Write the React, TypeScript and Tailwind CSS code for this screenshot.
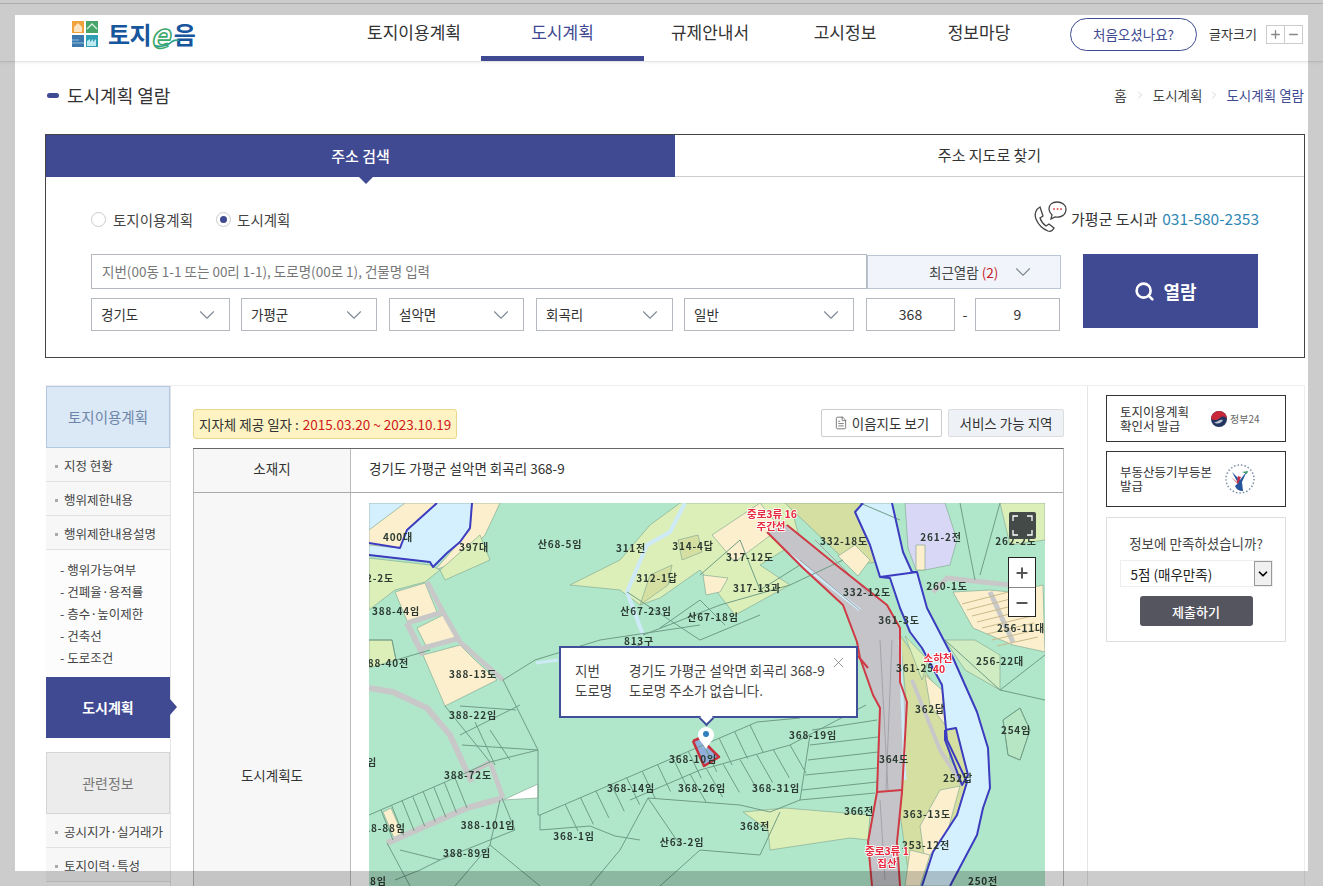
import { ChevronDown, ChevronRight, FileText, Minus, Plus, Search, X } from 'lucide-react';

type Shape = [fill: string, points: string];
type Line = [stroke: string, width: number, points: string];
type Label = [text: string, x: number, y: number];

const BEIGE = '#fcefcd';
const PALE = '#dcefb9';
const KHAKI = '#d5dfa2';
const WATER = '#d4effd';

const fields: Shape[] = [
  [WATER, '369,503 472,503 470,528 460,542 447,553 433,567 430,562 369,555'],
  [BEIGE, '369,545 400,548 407,530 437,503 405,503 369,530'],
  [BEIGE, '472,503 500,503 485,535 462,560 435,570 470,530'],
  [PALE, '369,558 430,565 440,570 425,582 395,590 369,610'],
  [PALE, '440,570 480,535 490,560 445,580'],
  [PALE, '369,640 392,640 396,660 369,668'],
  [BEIGE, '395,592 425,583 437,612 408,623'],
  [BEIGE, '417,628 443,615 457,638 427,648'],
  [BEIGE, '423,655 460,645 475,660 497,680 445,706'],
  [BEIGE, '383,812 391,808 402,833 394,838'],
  [PALE, '570,585 620,560 650,525 680,503 790,503 800,540 760,565 790,585 735,615 700,570 660,598 640,605 620,590'],
  [KHAKI, '678,540 698,535 702,552 682,560'],
  [KHAKI, '650,575 672,565 668,585 640,605'],
  [BEIGE, '712,535 760,503 780,528 735,562'],
  [BEIGE, '703,575 728,578 720,592 706,595'],
  [KHAKI, '785,503 860,503 878,562 850,565'],
  [BEIGE, '838,556 855,545 870,560 858,576'],
  ['#d8d8f6', '905,503 945,503 957,540 950,565 925,570 916,570 908,548'],
  [BEIGE, '916,545 925,545 925,570 916,570'],
  [BEIGE, '953,592 990,590 1010,592 1043,585 1045,652 1013,645 973,628'],
  [PALE, '1000,503 1045,503 1045,540 1010,545'],
  ['#d0ecc2', '945,640 965,670 1000,690 1000,655 975,640'],
  [KHAKI, '900,635 945,700 950,760 968,785 958,812 930,862 910,884 898,800 906,700'],
  [PALE, '905,636 928,660 922,680'],
  [BEIGE, '925,675 942,690 945,725 930,705'],
  [BEIGE, '940,790 960,786 948,830 925,862 920,826'],
  [BEIGE, '910,850 930,855 920,886 905,886'],
  [PALE, '743,812 785,808 870,815 868,840 850,838 770,850 768,830'],
  ['#b6e6c4', '1003,720 1020,708 1030,730 1020,760 1008,755'],
  ['#ffffff', '503,800 538,784 538,798'],
  ['#c4c4c9', '767,532 787,525 840,568 887,605 900,628 900,682 907,702 902,792 897,842 900,886 872,886 868,842 877,792 880,708 873,695 860,658 857,642 843,605 803,568'],
  [WATER, '863,503 892,503 903,552 912,572 917,572 927,608 953,658 977,712 988,748 990,788 983,808 977,835 950,886 922,886 933,852 957,815 967,782 947,740 942,685 922,648 910,632 900,608 890,578 880,577 870,545 855,512'],
  [KHAKI, '945,730 956,728 968,775 962,785 946,740'],
  ['#8fb0dc', '693,741 700,738 719,757 704,766'],
];

const roads: Line[] = [
  ['#c8c8c8', 5, '427,582 443,612 460,642 503,680'],
  ['#c8c8c8', 5, '407,623 443,612'],
  ['#c8c8c8', 5, '423,648 460,638'],
  ['#c8c8c8', 6, '407,623 423,655'],
  ['#c8c8c8', 6, '369,688 393,692 427,708 450,735 467,772 472,782'],
  ['#c8c8c8', 5, '490,762 503,798'],
  ['#c8c8c8', 5, '468,775 490,762'],
  ['#c8c8c8', 6, '503,798 467,808 387,843'],
  ['#c8c8c8', 5, '933,592 947,578 1010,585'],
  ['#c8c8c8', 5, '990,592 1013,642'],
  ['#c8c8c8', 4, '912,680 940,750 962,785'],
];

const water: Line[] = [
  ['#cdeaf6', 4, '685,503 670,532 647,545 627,592 643,635'],
  ['#cdeaf6', 3, '536,663 558,660'],
  ['#cdeaf6', 3, '790,555 860,610'],
  ['#cdeaf6', 3, '900,640 905,780'],
];

const parcels: Line[] = [
  ['#6f9d85', 1, '369,640 392,640 396,660 430,650'],
  ['#6f9d85', 1, '503,680 535,660 600,640 700,625'],
  ['#6f9d85', 1, '503,680 538,750 538,815 540,815'],
  ['#6f9d85', 1, '460,706 516,710'],
  ['#6f9d85', 1, '445,706 490,762'],
  ['#6f9d85', 1, '460,735 520,705'],
  ['#6f9d85', 1, '462,745 538,750'],
  ['#6f9d85', 1, '490,730 510,760'],
  ['#6f9d85', 1, '475,722 495,765'],
  ['#6f9d85', 1, '369,815 443,783 490,762 538,750'],
  ['#6f9d85', 1, '502,798 515,830 440,860 400,850'],
  ['#6f9d85', 1, '387,843 410,886'],
  ['#6f9d85', 1, '500,800 490,845 455,886'],
  ['#6f9d85', 1, '490,845 540,886'],
  ['#6f9d85', 1, '440,860 420,870 395,880'],
  ['#6f9d85', 1, '540,815 540,830 590,826 615,836 640,840'],
  ['#6f9d85', 1, '540,815 757,722 800,718'],
  ['#6f9d85', 1, '630,800 700,770 790,745 866,705'],
  ['#6f9d85', 1, '648,798 740,805 770,812 800,800 875,793'],
  ['#6f9d85', 1, '648,798 620,850 590,886'],
  ['#6f9d85', 1, '648,798 680,845'],
  ['#6f9d85', 1, '660,886 700,850 760,855 780,812'],
  ['#6f9d85', 1, '627,592 700,640 760,615'],
  ['#6f9d85', 1, '660,628 700,600 725,625'],
  ['#6f9d85', 1, '643,635 720,605 790,585 843,560'],
  ['#6f9d85', 1, '590,660 640,645'],
  ['#6f9d85', 1, '700,575 740,540 760,590 800,565'],
  ['#6f9d85', 1, '810,735 800,800'],
  ['#6f9d85', 1, '812,730 877,720'],
  ['#6f9d85', 1, '810,745 878,737'],
  ['#6f9d85', 1, '808,760 878,752'],
  ['#6f9d85', 1, '805,775 877,768'],
  ['#6f9d85', 1, '802,790 877,782'],
  ['#6f9d85', 1, '1000,690 1045,700'],
  ['#6f9d85', 1, '945,640 1000,690 1045,655'],
  ['#6f9d85', 1, '960,503 975,580'],
  ['#6f9d85', 1, '1000,503 980,575'],
  ['#6f9d85', 1, '1003,720 1020,708 1030,730 1020,760 1008,755 1003,720'],
  ['#6f9d85', 1, '900,520 860,503'],
];

const boundaries: Line[] = [
  ['#cf3a44', 2, '767,532 803,568 843,605 857,642 860,658 873,695 880,708 877,792 868,842 872,886'],
  ['#cf3a44', 2, '787,525 840,568 887,605 900,628 900,682 907,702 902,792 897,842 900,886'],
  ['#cf3a44', 2, '877,792 902,790'],
  ['#cf3a44', 2, '857,655 868,668'],
  ['#3c3cc0', 2, '437,503 407,530 400,548 369,543'],
  ['#3c3cc0', 2, '472,503 470,528 460,542 447,553 433,567 430,562 369,555'],
  ['#3c3cc0', 2, '863,503 855,512 870,545 880,577 890,578 900,608 910,632 922,648 942,685 947,740 967,782 957,815 933,852 922,886'],
  ['#3c3cc0', 2, '892,503 903,552 912,572 917,572 927,608 953,658 977,712 988,748 990,788 983,808 977,835 950,886'],
  ['#3c3cc0', 2, '880,577 917,572'],
  ['#3c3cc0', 2, '945,730 956,728 968,775 962,785 945,740 945,730'],
  ['#c8303c', 2.500, '693,741 700,738 719,757 704,766 693,741'],
];

const labels: Label[] = [
  ['400대', 398, 541], ['397대', 474, 551], ['산68-5임', 560, 548], ['311전', 631, 552], ['314-4답', 693, 550],
  ['317-12도', 750, 561], ['332-18도', 844, 545], ['261-2전', 941, 541], ['262-2도', 1016, 545],
  ['2-2도', 380, 582], ['312-1답', 657, 582], ['317-13과', 757, 592], ['332-12도', 867, 596], ['260-1도', 947, 590],
  ['388-44임', 396, 615], ['산67-23임', 646, 615], ['산67-18임', 713, 621], ['361-3도', 899, 624], ['256-11대', 1021, 632],
  ['813구', 639, 645], ['388-40전', 385, 667], ['361-25', 915, 672], ['256-22대', 1000, 665], ['388-13도', 473, 678],
  ['388-22임', 473, 719], ['362답', 930, 713], ['254임', 1016, 734], ['368-19임', 813, 739], ['364도', 894, 763],
  ['임', 372, 766], ['388-72도', 468, 779], ['368-10임', 693, 763], ['368-14임', 631, 792], ['368-26임', 702, 792],
  ['368-31임', 776, 792], ['252답', 958, 782], ['366전', 859, 815], ['363-13도', 927, 818], ['368전', 755, 830],
  ['388-101임', 488, 829], ['18-88임', 385, 832], ['368-1임', 574, 840], ['산63-2임', 682, 846], ['253-12전', 926, 849],
  ['388-89임', 467, 857], ['18임', 375, 885], ['250전', 983, 885],
];

const redLabels: Label[] = [
  ['중로3류 16', 772, 518], ['주간선', 771, 530], ['소하천', 938, 662], ['40', 939, 673], ['중로3류 1', 887, 855], ['집산', 887, 867],
];

// row of lot dividers hanging off a straight line
function lotLines(x1: number, y1: number, x2: number, y2: number, n: number, dx: number, dy: number) {
  return Array.from({ length: n }, (_, i) => {
    const x = x1 + ((x2 - x1) * i) / (n - 1);
    const y = y1 + ((y2 - y1) * i) / (n - 1);
    return `M${x} ${y}l${dx} ${dy}`;
  }).join('');
}

function LandMap() {
  const lots =
    lotLines(381, 810, 455, 778, 8, 12, 30) +
    lotLines(565, 804, 750, 725, 13, 13, 27) +
    lotLines(690, 774, 790, 745, 7, 16, 28);
  const stripes = Array.from({ length: 8 }, (_, i) => `M${962 + i * 5} ${604 + i * 6}l${62 - i * 3} -${16 - i}`).join('');

  return (
    <svg viewBox="369 503 676 384" className="block h-[384px] w-[676px] bg-[#b0e7cb] blur-[0.35px]">
      {fields.map(([fill, points]) => (
        <polygon key={points} points={points} fill={fill} stroke="#86ad93" strokeWidth="0.7" />
      ))}
      {[...roads, ...water, ...parcels].map(([stroke, width, points]) => (
        <polyline key={points} points={points} fill="none" stroke={stroke} strokeWidth={width} strokeLinejoin="round" />
      ))}
      <path d={lots} stroke="#6f9d85" fill="none" />
      <path d={stripes} stroke="#c9b98a" fill="none" />
      <path d="M800 560l60 50M815 540l55 55M880 640l8 150M892 640l-6 150M880 800l5 80" stroke="#a3a3aa" fill="none" />
      {boundaries.map(([stroke, width, points]) => (
        <polyline key={points} points={points} fill="none" stroke={stroke} strokeWidth={width} strokeLinejoin="round" />
      ))}
      {labels.map(([text, x, y]) => (
        <text key={text + x} x={x} y={y} textAnchor="middle" fontSize="10" fontWeight="700" letterSpacing="0.8" fill="#2c3a32">
          {text}
        </text>
      ))}
      {redLabels.map(([text, x, y]) => (
        <text key={text} x={x} y={y} textAnchor="middle" fontSize="10.5" fontWeight="700" fill="#e8283c" stroke="#ffffff" strokeWidth="1.5" paintOrder="stroke">
          {text}
        </text>
      ))}
      <path d="M706 727c-5 0-8 4-8 8 0 5 5 8 8 14 3-6 8-9 8-14 0-4-3-8-8-8z" fill="#ffffff" />
      <circle cx="706" cy="734" r="3" fill="#2f80c0" />
    </svg>
  );
}

function Logo() {
  return (
    <div className="flex items-center gap-[10px]">
      <svg viewBox="0 0 26 26" className="h-[26px] w-[26px]">
        <rect x="0" y="0" width="12" height="12" fill="#f2a23a" />
        <path d="M2 6l4-4 4 4v5H2z" fill="#fff" opacity="0.7" />
        <rect x="14" y="0" width="12" height="12" fill="#47a56b" />
        <path d="M15 8l5-5 5 5" fill="none" stroke="#d7f0df" strokeWidth="1.4" />
        <rect x="0" y="14" width="12" height="12" fill="#3c77ad" />
        <path d="M0 19h7M0 22h12" stroke="#8fc0e0" />
        <rect x="14" y="14" width="12" height="12" fill="#2f9fb5" />
        <path d="M15 25v-5l3-2v3l3-3v3l3-3v7z" fill="#bfe9f0" />
      </svg>
      <div className="relative flex items-center text-[24px] leading-none font-bold tracking-[-0.5px] text-[#17559c]">
        <span>토지</span>
        <span className="mr-[5px] ml-[-1px] text-[33px] leading-[24px] text-transparent italic [-webkit-text-stroke:1.6px_#3aa76a]">e</span>
        <span>음</span>
        <svg viewBox="0 0 30 10" className="absolute bottom-[-2px] left-[46px] h-[10px] w-[26px]" fill="none" stroke="#2f9f8a" strokeWidth="2">
          <path d="M1 8c8 2 14 0 19-4 2-2 5-3 9-2" />
        </svg>
      </div>
    </div>
  );
}

function Select({ label, width }: { label: string; width: string }) {
  return (
    <div className={`flex h-[33px] items-center justify-between border border-[#b4b8bf] bg-white pr-[9px] pl-[9px] text-[13.5px] text-[#333] ${width}`}>
      <span>{label}</span>
      <ChevronDown className="h-[26px] w-[26px] text-[#7f8996]" strokeWidth={1} />
    </div>
  );
}

function SideItem({ label }: { label: string }) {
  return (
    <div className="flex h-[34px] items-center gap-[6px] border-b border-[#e2e2e2] bg-[#f7f7f7] pt-[3px] pl-[9px] text-[12.5px] text-[#444]">
      <span className="h-[3px] w-[3px] bg-[#aaa]" />
      {label}
    </div>
  );
}

export default function App() {
  return (
    <div className="relative h-[886px] w-[1323px] overflow-hidden bg-white font-['Noto_Sans_CJK_KR','Noto_Sans',sans-serif] text-[#333]">
      <header className="flex h-[62px] border-b border-[#e5e5e5] shadow-[0_1px_3px_rgba(0,0,0,0.06)]">
        <div className="flex w-[347px] items-center pt-[7px] pl-[72px]">
          <Logo />
        </div>
        <nav className="flex text-[17px] text-[#333]">
          <a className="flex w-[134px] items-center justify-center pt-[3px]">토지이용계획</a>
          <a className="flex w-[163px] items-center justify-center border-b-[5px] border-[#404a92] pt-[7px] text-[#404a92]">도시계획</a>
          <a className="flex w-[132px] items-center justify-center pt-[3px]">규제안내서</a>
          <a className="flex w-[138px] items-center justify-center pt-[3px]">고시정보</a>
          <a className="flex w-[130px] items-center justify-center pt-[3px]">정보마당</a>
        </nav>
        <div className="ml-[26px] flex items-center pt-[7px]">
          <div className="flex h-[33px] w-[127px] items-center justify-center rounded-full border border-[#404a92] text-[13.5px] text-[#404a92]">처음오셨나요?</div>
          <span className="ml-[12px] text-[13px]">글자크기</span>
          <div className="ml-[9px] flex h-[19px] w-[37px] border border-[#ccc] text-[#888]">
            <span className="flex flex-1 items-center justify-center border-r border-[#ccc]"><Plus className="h-[13px] w-[13px]" strokeWidth={2.5} /></span>
            <span className="flex flex-1 items-center justify-center"><Minus className="h-[13px] w-[13px]" strokeWidth={2.5} /></span>
          </div>
        </div>
      </header>

      <div className="flex h-[72px] items-center justify-between pr-[19px] pb-[6px] pl-[47px]">
        <div className="flex items-center gap-[8px] text-[18px] text-[#333]">
          <span className="h-[5px] w-[12px] rounded-full bg-[#404a92]" />
          도시계획 열람
        </div>
        <div className="flex items-center text-[13.5px] text-[#444]">
          <span>홈</span>
          <ChevronRight className="mx-[7px] h-[12px] w-[12px] text-[#aaa]" strokeWidth={1} />
          <span>도시계획</span>
          <ChevronRight className="mx-[6px] h-[12px] w-[12px] text-[#aaa]" strokeWidth={1} />
          <span className="text-[#404a92]">도시계획 열람</span>
        </div>
      </div>

      <section className="mx-[45px] h-[224px] w-[1260px] border border-[#444]">
        <div className="flex h-[42px] text-[15px]">
          <div className="relative flex w-[629px] items-center justify-center bg-[#404a92] font-medium text-white">
            주소 검색
            <span className="absolute top-[41px] left-[312px] h-0 w-0 border-x-[8px] border-t-[8px] border-x-transparent border-t-[#404a92]" />
          </div>
          <div className="flex flex-1 items-center justify-center border-b border-[#ccc]">주소 지도로 찾기</div>
        </div>

        <div className="flex h-[77px] items-start justify-between pr-[45px] pl-[45px]">
          <div className="mt-[32px] flex items-center text-[14.5px] text-[#444]">
            <span className="h-[15px] w-[15px] rounded-full border border-[#ccc] bg-white" />
            <span className="ml-[7px]">토지이용계획</span>
            <span className="ml-[23px] flex h-[15px] w-[15px] items-center justify-center rounded-full border border-[#ccc]">
              <span className="h-[7px] w-[7px] rounded-full bg-[#404a92]" />
            </span>
            <span className="ml-[6px]">도시계획</span>
          </div>
          <div className="mt-[24px] flex items-center">
            <svg viewBox="0 0 34 32" className="h-[32px] w-[34px]" fill="none" stroke="#444" strokeWidth="1.3">
              <path d="M7 6C3 8 1 13 3 18c2 5 7 10 12 12 3 1 5-1 6-3l-5-4-3 2c-3-2-5-5-6-8l3-2-3-9z" />
              <path d="M24 1c-5 0-8 3-8 7 0 3 2 5 3 6l-1 4 4-2c6 1 11-2 11-8 0-4-4-7-9-7z" />
              <path d="M21 8h.1M24.500 8h.1M28 8h.1" stroke="#e05050" strokeWidth="1.8" strokeLinecap="round" />
            </svg>
            <span className="mt-[4px] ml-[4px] text-[15px] text-[#333]">가평군 도시과</span>
            <span className="mt-[4px] ml-[5px] text-[15.5px] text-[#2f87b5]">031-580-2353</span>
          </div>
        </div>

        <div className="flex pl-[45px]">
          <div className="w-[970px]">
            <div className="flex h-[35px]">
              <div className="flex w-[776px] items-center border border-[#b4b8bf] pl-[10px] text-[13.5px] text-[#777]">지번(00동 1-1 또는 00리 1-1), 도로명(00로 1), 건물명 입력</div>
              <div className="mt-[1px] flex w-[194px] items-center gap-[12px] border border-[#b8c6d6] bg-[#f1f5fb] pl-[61px] text-[13.5px] text-[#444]">
                <span>최근열람 <span className="text-[#c8202a]">(2)</span></span>
                <ChevronDown className="h-[26px] w-[26px] text-[#7f8996]" strokeWidth={1} />
              </div>
            </div>
            <div className="mt-[9px] flex">
              <Select label="경기도" width="w-[139px]" />
              <Select label="가평군" width="ml-[11px] w-[136px]" />
              <Select label="설악면" width="ml-[12px] w-[135px]" />
              <Select label="회곡리" width="ml-[12px] w-[137px]" />
              <Select label="일반" width="ml-[11px] w-[170px]" />
              <div className="ml-[12px] flex h-[33px] w-[89px] items-center justify-center border border-[#b4b8bf] text-[14px]">368</div>
              <span className="flex w-[20px] items-center justify-center text-[14px]">-</span>
              <div className="flex h-[33px] w-[85px] items-center justify-center border border-[#b4b8bf] text-[14px]">9</div>
            </div>
          </div>
          <button className="ml-[22px] flex h-[74px] w-[175px] items-center justify-center gap-[8px] bg-[#404a92] pr-[10px] text-[18px] font-bold text-white">
            <Search className="h-[21px] w-[21px]" strokeWidth={3} />
            열람
          </button>
        </div>
      </section>

      <main className="mx-[45px] mt-[27px] flex h-[600px] w-[1260px] border-t border-r border-[#eee]">
        <aside className="w-[126px] border-r border-[#e5e5e5]">
          <div className="ml-[1px] w-[124px]">
            <div className="flex h-[62px] items-center justify-center border border-[#b3c8e0] bg-[#dbe8f5] text-[14.5px] text-[#6d86a8]">토지이용계획</div>
            <SideItem label="지정 현황" />
            <SideItem label="행위제한내용" />
            <SideItem label="행위제한내용설명" />
            <ul className="flex h-[127px] flex-col justify-center gap-[2px] bg-[#fcfcfc] pl-[14px] text-[12.500px] leading-[20px] text-[#444]">
              <li>- 행위가능여부</li>
              <li>- 건폐율·용적률</li>
              <li>- 층수·높이제한</li>
              <li>- 건축선</li>
              <li>- 도로조건</li>
            </ul>
            <div className="relative flex h-[61px] items-center justify-center bg-[#404a92] text-[14px] font-bold text-white">
              도시계획
              <span className="absolute top-[22px] left-[124px] h-0 w-0 border-y-[8px] border-l-[7px] border-y-transparent border-l-[#404a92]" />
            </div>
            <div className="mt-[14px] flex h-[62px] items-center justify-center border border-[#d5d5d5] bg-[#ececec] text-[14px] text-[#777]">관련정보</div>
            <SideItem label="공시지가·실거래가" />
            <SideItem label="토지이력·특성" />
          </div>
        </aside>

        <div className="ml-[22px] w-[871px]">
          <div className="mt-[23px] flex h-[30px] items-start justify-between">
            <div className="flex h-[30px] items-center rounded-[3px] border border-[#e8d88e] bg-[#fdf3c3] px-[5px] text-[13.5px] text-[#333]">
              지자체 제공 일자 : <span className="ml-[4px] text-[#cf1a1a]">2015.03.20 ~ 2023.10.19</span>
            </div>
            <div className="flex gap-[6px] text-[13.5px] text-[#333]">
              <div className="flex h-[28px] w-[121px] items-center justify-center gap-[4px] rounded-[2px] border border-[#ccc] bg-white">
                <FileText className="h-[14px] w-[14px] text-[#555]" strokeWidth={1.3} />
                이음지도 보기
              </div>
              <div className="flex h-[28px] w-[116px] items-center justify-center rounded-[2px] border border-[#ddd] bg-[#eef2f6]">서비스 가능 지역</div>
            </div>
          </div>

          <div className="mt-[9px] border-t border-r border-[#666] border-r-[#bbb] text-[13.5px] text-[#333]">
            <div className="flex h-[44px] border-b border-[#aaa] pb-0">
              <div className="flex w-[158px] items-center justify-center border-r border-l border-[#bbb] bg-[#f7f7f7] pb-[4px]">소재지</div>
              <div className="flex flex-1 items-center pb-[4px] pl-[18px]">경기도 가평군 설악면 회곡리 368-9</div>
            </div>
            <div className="flex h-[564px]">
              <div className="flex w-[158px] items-center justify-center border-r border-l border-[#bbb] bg-[#f7f7f7]">도시계획도</div>
              <div className="relative flex-1 pt-[10px] pl-[18px]">
                <LandMap />
                <div className="absolute top-[153px] left-[208px] h-[72px] w-[299px] border-2 border-[#3f4f9a] bg-white pt-[12px] pl-[14px] text-[13.5px] leading-[20px] text-[#444]">
                  <div className="flex"><span className="w-[54px]">지번</span>경기도 가평군 설악면 회곡리 368-9</div>
                  <div className="flex"><span className="w-[54px]">도로명</span>도로명 주소가 없습니다.</div>
                  <X className="absolute top-[6px] right-[9px] h-[17px] w-[17px] text-[#888]" strokeWidth={1.2} />
                  <span className="absolute top-[70px] left-[140px] h-[11px] w-[11px] rotate-45 border-r-2 border-b-2 border-[#3f4f9a] bg-white [margin-top:-5px]" />
                </div>
                <div className="absolute top-[19px] left-[658px] flex h-[27px] w-[27px] items-center justify-center rounded-[2px] bg-[#444a48]">
                  <svg viewBox="0 0 21 21" className="h-[21px] w-[21px]" fill="none" stroke="#fff" strokeWidth="1.3">
                    <path d="M1 6V1h5M15 1h5v5M20 15v5h-5M6 20H1v-5" />
                  </svg>
                </div>
                <div className="absolute top-[64px] left-[657px] h-[60px] w-[28px] border border-[#222] bg-white text-[#555]">
                  <div className="flex h-[30px] items-center justify-center border-b border-[#888]"><Plus className="h-[16px] w-[16px]" strokeWidth={3} /></div>
                  <div className="flex h-[29px] items-center justify-center"><Minus className="h-[16px] w-[16px]" strokeWidth={3} /></div>
                </div>
              </div>
            </div>
          </div>
        </div>

        <div className="ml-[23px] flex-1 border-l border-[#e5e5e5] pt-[9px] pl-[18px]">
          <div className="flex h-[47px] w-[180px] items-center border border-[#333] pl-[13px] text-[12.500px] leading-[14px] text-[#333]">
            <span className="w-[90px]">토지이용계획<br />확인서 발급</span>
            <svg viewBox="0 0 16 16" className="ml-[1px] h-[16px] w-[16px]">
              <circle cx="8" cy="8" r="8" fill="#22345f" />
              <path d="M0 8a8 8 0 0 1 16 0c-2-3-5-3-7-1S3 10 0 8z" fill="#c9283a" />
              <path d="M3 11c3 1 5-3 9-2-1 3-6 5-9 2z" fill="#fff" opacity="0.7" />
            </svg>
            <span className="ml-[3px] text-[10px] text-[#666]">정부24</span>
          </div>
          <div className="mt-[9px] flex h-[56px] w-[180px] items-center border border-[#333] pl-[13px] text-[12.500px] leading-[14px] text-[#333]">
            <span className="w-[104px]">부동산등기부등본<br />발급</span>
            <svg viewBox="0 0 32 32" className="h-[32px] w-[32px]">
              <circle cx="16" cy="16" r="14" fill="none" stroke="#7c8fa6" strokeWidth="1.5" strokeDasharray="1.5 2" />
              <path d="M8 9l8 8 7-9-5 11 1 9c-4 0-7-2-8-5l3-3z" fill="#26559b" />
              <path d="M7 14l6 5 1-6 3 1-3 7z" fill="#c8304a" />
              <path d="M18 9l5 2 1-3z" fill="#3a9a70" />
            </svg>
          </div>
          <div className="mt-[10px] flex h-[125px] w-[180px] flex-col items-center border border-[#ddd] pt-[15px] text-[13.5px] text-[#444]">
            <span>정보에 만족하셨습니까?</span>
            <div className="mt-[7px] flex h-[27px] w-[153px] items-center justify-between border border-[#eee] pl-[10px] text-[13.5px] text-[#222]">
              5점 (매우만족)
              <span className="flex h-full w-[18px] items-center justify-center border border-[#999] bg-[#f0f0f0]">
                <ChevronDown className="h-[14px] w-[14px] text-black" strokeWidth={3} />
              </span>
            </div>
            <button className="mt-[9px] h-[30px] w-[113px] rounded-[3px] bg-[#55555f] text-[13px] font-medium text-white">제출하기</button>
          </div>
        </div>
      </main>

      <div className="pointer-events-none absolute inset-0 border-[15px] border-black/20" />
      <div className="pointer-events-none absolute top-[3px] right-0 left-0 h-px bg-black/15" />
    </div>
  );
}
